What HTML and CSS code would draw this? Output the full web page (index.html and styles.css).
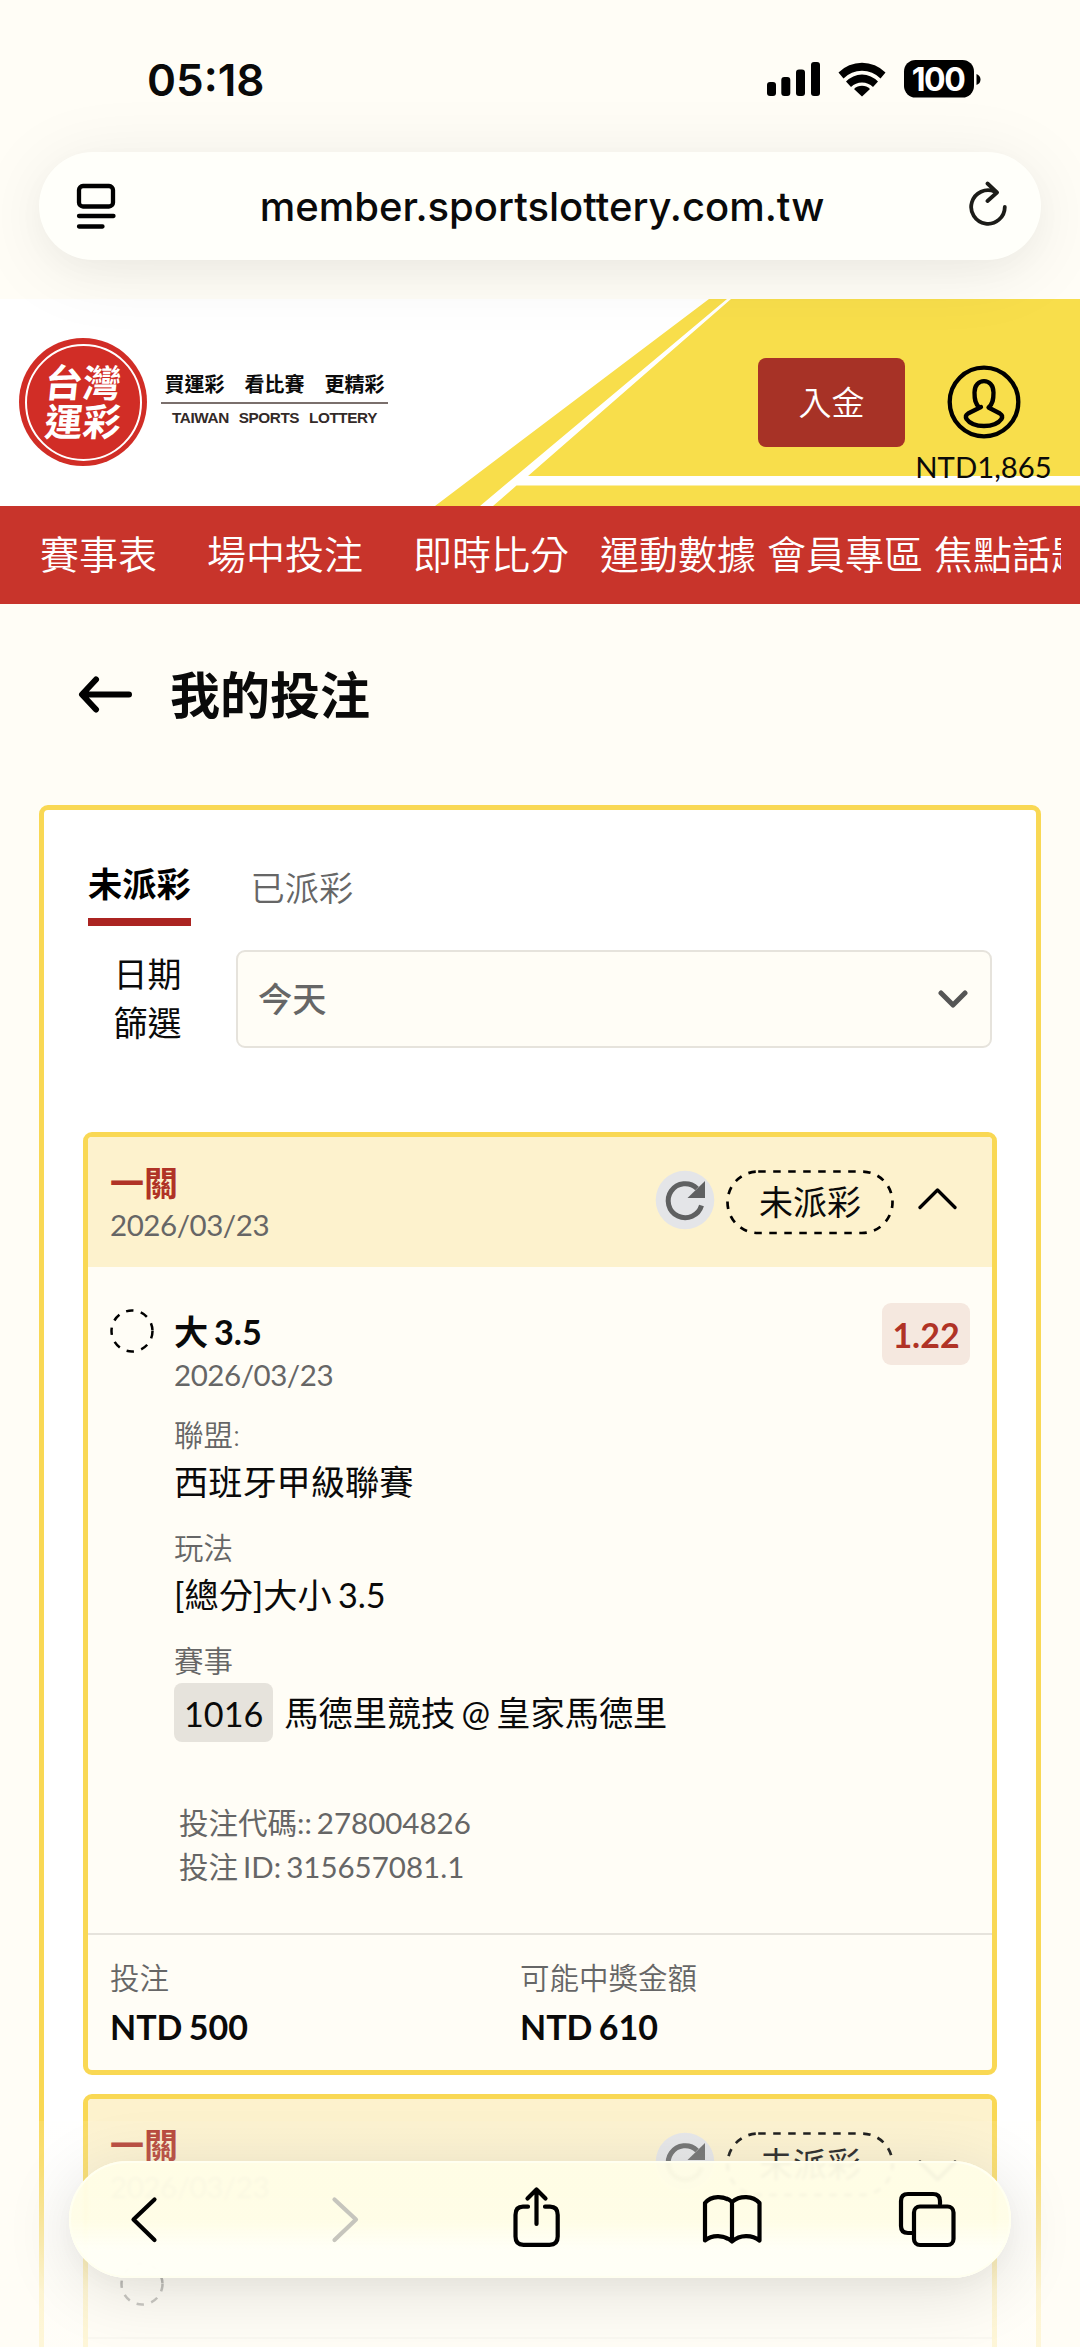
FILE: index.html
```html
<!DOCTYPE html>
<html lang="zh-Hant">
<head>
<meta charset="utf-8">
<title>我的投注</title>
<link rel="stylesheet" href="styles.css">
</head>
<body>
<div class="screen">
  <div class="chrome-top">
    <div class="status">
      <span class="time">05:18</span>
      <svg class="status-icons" width="214" height="40" viewBox="767 59 214 40">
        <rect x="767" y="82" width="9" height="14" rx="3"/>
        <rect x="781.3" y="77" width="9" height="19" rx="3"/>
        <rect x="796" y="69.5" width="9" height="26.500" rx="3"/>
        <rect x="811" y="62" width="9" height="34" rx="3"/>
        <path d="M838.500 72.500a33 33 0 0 1 47 0l-5 6a26 26 0 0 0-37 0z"/>
        <path d="M846 81.500a22 22 0 0 1 32 0l-5 5.500a15.500 15.500 0 0 0-22 0z"/>
        <path d="M854 89a11.500 11.500 0 0 1 16 0l-8 7.500z"/>
        <rect x="904" y="60" width="70" height="37.500" rx="11.500"/>
        <path d="M976.500 74q4 1.500 4 5.500t-4 5.500z"/>
        <text x="938" y="90.500" class="battery" text-anchor="middle">100</text>
      </svg>
    </div>
    <div class="urlbar">
      <svg width="40" height="46" viewBox="76 184 40 46" class="line w4">
        <rect x="79" y="187" width="34" height="20.500" rx="4"/>
        <path d="M79 217H113.500M79 227.500H102.500"/>
      </svg>
      <span class="url">member.sportslottery.com.tw</span>
      <svg width="40" height="50" viewBox="967 182 40 50" class="line reload">
        <path d="M994 192.700A16.800 16.800 0 1 0 1003.800 208M986.500 184.500L996 193.500L986.500 202"/>
      </svg>
    </div>
  </div>

  <header class="banner">
    <svg class="banner-art" width="1080" height="207" viewBox="0 0 1080 207">
      <path fill="#f8de4b" d="M709 0H727L480 207H435zM731 0H1080V177H528zM516.500 186.500H1080V207H493z"/>
    </svg>
    <div class="brand">
      <div class="seal"><div class="seal-ring"><span>台灣</span><span>運彩</span></div></div>
      <div class="slogan">
        <div class="slogan-zh">買運彩　看比賽　更精彩</div>
        <div class="slogan-en">TAIWAN SPORTS LOTTERY</div>
      </div>
    </div>
    <div class="account">
      <button class="deposit">入金</button>
      <div class="user">
        <svg width="74" height="74" viewBox="-37 -37 74 74" class="line w4">
          <circle r="34.300"/>
          <path d="M-4.500 5.500C-9 2-9.500-3-9.500-9.500C-9.500-17-5-20.800 0-20.800S9.500-17 9.500-9.500C9.500-3 9 2 4.500 5.500L16 11.500C18.500 13 18.500 15 17.500 17C14 22 7 24 0 24S-14 22-17.500 17C-18.500 15-18.500 13-16 11.500L-3 5"/>
        </svg>
        <span class="balance">NTD1,865</span>
      </div>
    </div>
  </header>

  <nav class="nav">
    <a>賽事表</a><a>場中投注</a><a>即時比分</a><a>運動數據</a><a>會員專區</a><a>焦點話題</a>
  </nav>

  <div class="page-title">
    <svg width="54" height="38" viewBox="0 0 54 38" class="line back"><path d="M51 18.500H5M18 3.500L4 18.500L18 33.500"/></svg>
    <h1>我的投注</h1>
  </div>

  <main class="panel">
    <div class="tabs">
      <div class="tab active">未派彩</div>
      <div class="tab">已派彩</div>
    </div>
    <div class="filter">
      <div class="filter-label">日期<br>篩選</div>
      <div class="select">
        <span>今天</span>
        <svg width="30" height="20" viewBox="0 0 30 20" class="line select-arrow"><path d="M3 4L15 16L27 4"/></svg>
      </div>
    </div>

    <article class="bet">
      <div class="bet-head">
        <div class="bet-id">
          <div class="legs">一關</div>
          <div class="date">2026/03/23</div>
        </div>
        <svg class="refresh" width="60" height="60" viewBox="-30 -30 60 60">
          <circle r="29.300" fill="#e4e5e8"/>
          <path d="M12-11.500A17 17 0 1 0 16.500 5.500" fill="none" stroke="#5f6061" stroke-width="5"/>
          <path d="M20-19V-2H2.500z" fill="#5f6061"/>
        </svg>
        <div class="pill">
          <svg width="168" height="65" viewBox="0 0 168 65"><rect x="1.500" y="1.500" width="165" height="61.500" rx="30.700"/></svg>
          <span>未派彩</span>
        </div>
        <svg width="40" height="24" viewBox="0 0 40 24" class="line toggle"><path d="M2 20.500L19.500 3L37 20.500"/></svg>
      </div>
      <div class="bet-body">
        <svg class="pending" width="44" height="44" viewBox="0 0 44 44"><circle cx="22" cy="22" r="20.500"/></svg>
        <div class="detail">
          <div class="pick">大 3.5</div>
          <div class="date">2026/03/23</div>
          <dl>
            <dt>聯盟:</dt><dd>西班牙甲級聯賽</dd>
            <dt>玩法</dt><dd>[總分]大小 3.5</dd>
            <dt>賽事</dt><dd class="match"><span class="chip">1016</span>馬德里競技 @ 皇家馬德里</dd>
          </dl>
          <div class="codes">投注代碼:: 278004826<br>投注 ID: 315657081.1</div>
        </div>
        <div class="odds">1.22</div>
      </div>
      <div class="bet-foot">
        <div><div class="k">投注</div><div class="v">NTD 500</div></div>
        <div><div class="k">可能中獎金額</div><div class="v">NTD 610</div></div>
      </div>
    </article>

    <article class="bet next">
      <div class="bet-head">
        <div class="bet-id">
          <div class="legs">一關</div>
          <div class="date">2026/03/23</div>
        </div>
        <svg class="refresh" width="60" height="60" viewBox="-30 -30 60 60">
          <circle r="29.300" fill="#e4e5e8"/>
          <path d="M12-11.500A17 17 0 1 0 16.500 5.500" fill="none" stroke="#5f6061" stroke-width="5"/>
          <path d="M20-19V-2H2.500z" fill="#5f6061"/>
        </svg>
        <div class="pill">
          <svg width="168" height="65" viewBox="0 0 168 65"><rect x="1.500" y="1.500" width="165" height="61.500" rx="30.700"/></svg>
          <span>未派彩</span>
        </div>
        <svg width="40" height="24" viewBox="0 0 40 24" class="line toggle"><path d="M2 3L19.500 20.500L37 3"/></svg>
      </div>
      <div class="bet-body">
        <svg class="pending" width="44" height="44" viewBox="0 0 44 44"><circle cx="22" cy="22" r="20.500"/></svg>
      </div>
      <div class="bet-foot"></div>
    </article>
  </main>

  <div class="fade"></div>
  <div class="toolbar">
    <svg width="900" height="70" viewBox="90 2184 900 70" class="line tools">
      <path d="M154.500 2199.500L133.500 2219.500L154.500 2240"/>
      <path class="off" d="M334.500 2199.500L356 2219.500L334.500 2240"/>
      <path d="M528 2206.700H523Q515.500 2206.700 515.500 2215V2236.500Q515.500 2244.800 523.500 2244.800H549.500Q557.700 2244.800 557.700 2236.500V2215Q557.700 2206.700 550 2206.700H545M536.500 2224V2190M527.500 2198.500L536.500 2189.500L545.500 2198.500"/>
      <path d="M732 2202C724 2195 711 2195.500 705 2203V2240.500C712 2234.500 724 2234.500 732 2241.500C740 2234.500 752 2234.500 759.500 2240.500V2203C753 2195.500 740 2195 732 2202V2240"/>
      <path d="M912 2233H908Q901 2233 901 2226V2201Q901 2194 908 2194H933Q940 2194 940 2201V2204"/>
      <rect x="914" y="2206.500" width="39.500" height="38.500" rx="6"/>
    </svg>
  </div>
</div>
</body>
</html>
```
FILE: styles.css
```css
* { box-sizing: border-box; }
body { margin: 0; background: #fffdf6; color: #0a0a0a; font-family: Lato, "Noto Sans CJK TC", sans-serif; }
.screen { position: relative; width: 1080px; height: 2347px; overflow: hidden; }
svg { display: block; flex: none; }
.line { fill: none; stroke: #000; stroke-linecap: round; stroke-linejoin: round; stroke-width: 4; }
.w4 { stroke-width: 4.3; }

.chrome-top { height: 299px; }
.status { height: 152px; padding: 59px 99px 0 147px; display: flex; justify-content: space-between; align-items: flex-start; }
.time { font: 600 44px/42px Inter, sans-serif; letter-spacing: 0; }
.battery { font: 700 32px Inter, sans-serif; letter-spacing: -1.5px; fill: #fff; }
.urlbar { position: relative; z-index: 2; height: 108px; margin: 0 39px; padding: 0 33px 0 37px; border-radius: 54px; background: #fffffa; display: flex; align-items: center; justify-content: space-between; box-shadow: 0 10px 75px rgba(0, 0, 0, .08), 0 10px 30px rgba(0, 0, 0, .025); }
.url { font: 500 40px/48px Inter, sans-serif; padding-top: 2px; }
.reload { stroke-width: 3.8; stroke: #1c1c18; }

.banner { position: relative; height: 207px; background: #fff; display: flex; justify-content: space-between; }
.banner-art { position: absolute; inset: 0; }
.brand, .account { position: relative; display: flex; align-items: flex-start; }
.brand { padding: 39px 0 0 19px; gap: 14px; }
.seal { width: 128px; height: 128px; border-radius: 50%; background: #d12d26; padding: 5.500px; }
.seal-ring { height: 100%; border: 2.500px solid #fff; border-radius: 50%; display: flex; flex-direction: column; align-items: center; justify-content: center; color: #fff; font-weight: 700; font-size: 38px; line-height: 39px; }
.seal-ring span { transform: skewX(-6deg); }
.slogan { width: 227px; padding-top: 33px; text-align: center; }
.slogan-zh { font-size: 20px; line-height: 26px; font-weight: 700; height: 33px; border-bottom: 2px solid #7a6f6c; white-space: nowrap; }
.slogan-en { font: 700 15.300px/18px "Liberation Sans", sans-serif; color: #332a28; letter-spacing: -.4px; word-spacing: 6px; padding-top: 5px; white-space: nowrap; }
.account { padding: 59px 29px 0 0; gap: 11px; }
.deposit { width: 147px; height: 89px; border: 0; border-radius: 8px; background: #a73226; color: #fff; font: 350 33px Lato, "Noto Sans CJK TC", sans-serif; padding: 0 0 3px; }
.user { display: flex; flex-direction: column; align-items: center; padding-top: 7px; width: 135px; }
.balance { font-size: 29.300px; line-height: 36px; margin-top: 10px; white-space: nowrap; }

.nav { height: 98px; width: 1061px; padding: 0 0 6px 40px; box-shadow: 19px 0 #c8342b; background: #c8342b; overflow: hidden; color: #fff; display: flex; align-items: center; font-size: 39px; font-weight: 350; white-space: nowrap; }
.nav a { flex: none; margin-right: 11px; }
.nav a:nth-child(1) { margin-right: 50px; }
.nav a:nth-child(2) { margin-right: 50px; }
.nav a:nth-child(3) { margin-right: 31px; }

.page-title { height: 201px; padding: 0 0 19px 78px; display: flex; align-items: center; gap: 38px; }
.back { stroke-width: 6; }
h1 { margin: 0; font-size: 50px; line-height: 60px; font-weight: 700; }

.panel { margin: 0 39px; height: 1600px; border: 5px solid #f9d854; border-radius: 9px; background: #fff; padding: 52px 39px 0; }
.tabs { display: flex; gap: 60px; margin-left: 5px; height: 64px; font-size: 34.200px; line-height: 44px; }
.tab { color: #666; font-weight: 350; padding-top: 4px; }
.active { color: #000; font-weight: 700; border-bottom: 8px solid #ab2421; padding-top: 0; }
.filter { display: flex; margin-top: 24px; }
.filter-label { width: 153px; text-align: center; font-size: 34px; line-height: 49px; padding-right: 24px; margin-top: -1px; }
.select { width: 756px; height: 98px; border: 2px solid #e6e3dc; border-radius: 9px; background: #fffdf6; display: flex; align-items: center; justify-content: space-between; padding: 0 22px 0 20px; color: #666; font-size: 34.200px; font-weight: 500; }
.select span { margin-top: -4px; }
.select-arrow { stroke: #555; stroke-width: 5; }

.bet { height: 943px; margin-top: 84px; width: 914px; border: 5px solid #f9d854; border-radius: 9px; background: #fffdf6; overflow: hidden; }
.bet.next { margin-top: 19px; }
.bet-head { height: 130px; background: #fdf2cd; display: flex; align-items: center; padding: 0 34px 0 22px; }
.bet-id { flex: 1; padding-top: 2px; }
.legs { font-size: 34px; line-height: 44px; font-weight: 700; color: #b03326; }
.date { font-size: 29.500px; letter-spacing: -.45px; line-height: 40px; color: #666; }
.refresh { margin: -5px 11px 0 0; }
.pill { position: relative; width: 168px; height: 65px; display: flex; align-items: center; justify-content: center; font-size: 34px; }
.pill svg { position: absolute; inset: 0; fill: none; stroke: #000; stroke-width: 2.700; stroke-dasharray: 7.500 7.500; }
.pill span { line-height: 40px; }
.toggle { margin: -6px 0 0 24px; stroke-width: 3.300; }
.bet-body { height: 666px; display: flex; align-items: flex-start; padding: 36px 22px 0; }
.pending { margin-top: 6px; fill: none; stroke: #000; stroke-width: 2.500; stroke-dasharray: 7.500 7.500; }
.detail { flex: 1; padding-left: 20px; word-spacing: -2.500px; }
.pick { font-size: 34.200px; line-height: 44px; font-weight: 700; margin: 7px 0 1px; }
dl { margin: 18px 0 0; font-weight: 400; }
dt { font-size: 29.500px; line-height: 44px; color: #666; font-weight: 350; }
dd { margin: 0 0 19px; font-size: 34.200px; line-height: 50px; }
.match { display: flex; align-items: center; gap: 11px; height: 59px; }
.chip { height: 59px; line-height: 62px; border-radius: 8px; background: #e6e3dc; padding: 0 10px; }
.codes { font-size: 29.500px; line-height: 44px; color: #666; padding: 40px 0 0 5px; }
.odds { width: 88px; height: 62px; border-radius: 9px; background: #f5e8df; color: #b03326; font-size: 34px; font-weight: 700; line-height: 64px; text-align: center; }
.bet-foot { border-top: 2px solid #e6e3dc; display: flex; padding: 21px 22px 0; }
.bet-foot > div { width: 410px; }
.k { font-size: 29.500px; line-height: 44px; color: #666; font-weight: 350; }
.v { font-size: 34px; line-height: 44px; font-weight: 700; margin-top: 5px; word-spacing: -2px; }
.next .bet-body { height: 108px; padding: 27px 22px 0 32px; }
.next .toggle { margin-top: 14px; }

.fade { position: absolute; left: 0; right: 0; top: 2121px; bottom: 0; background: linear-gradient(rgba(255, 253, 246, .1), rgba(255, 253, 246, .2) 20%, rgba(255, 253, 246, .78) 75%, rgba(255, 253, 246, .82)); }
.toolbar { position: absolute; left: 69px; top: 2161px; width: 942px; height: 117px; border-radius: 59px; background: linear-gradient(rgba(255, 253, 230, .95) 50%, rgba(255, 255, 246, .98) 75%); backdrop-filter: blur(1.500px); box-shadow: inset 0 0 0 2px #fffff0, 0 12px 70px rgba(0, 0, 0, .12), 0 8px 30px rgba(0, 0, 0, .03); }
.tools { position: absolute; left: 21px; top: 23px; stroke-width: 4.200; }
.tools .off { stroke: #c6c5bd; }
```
